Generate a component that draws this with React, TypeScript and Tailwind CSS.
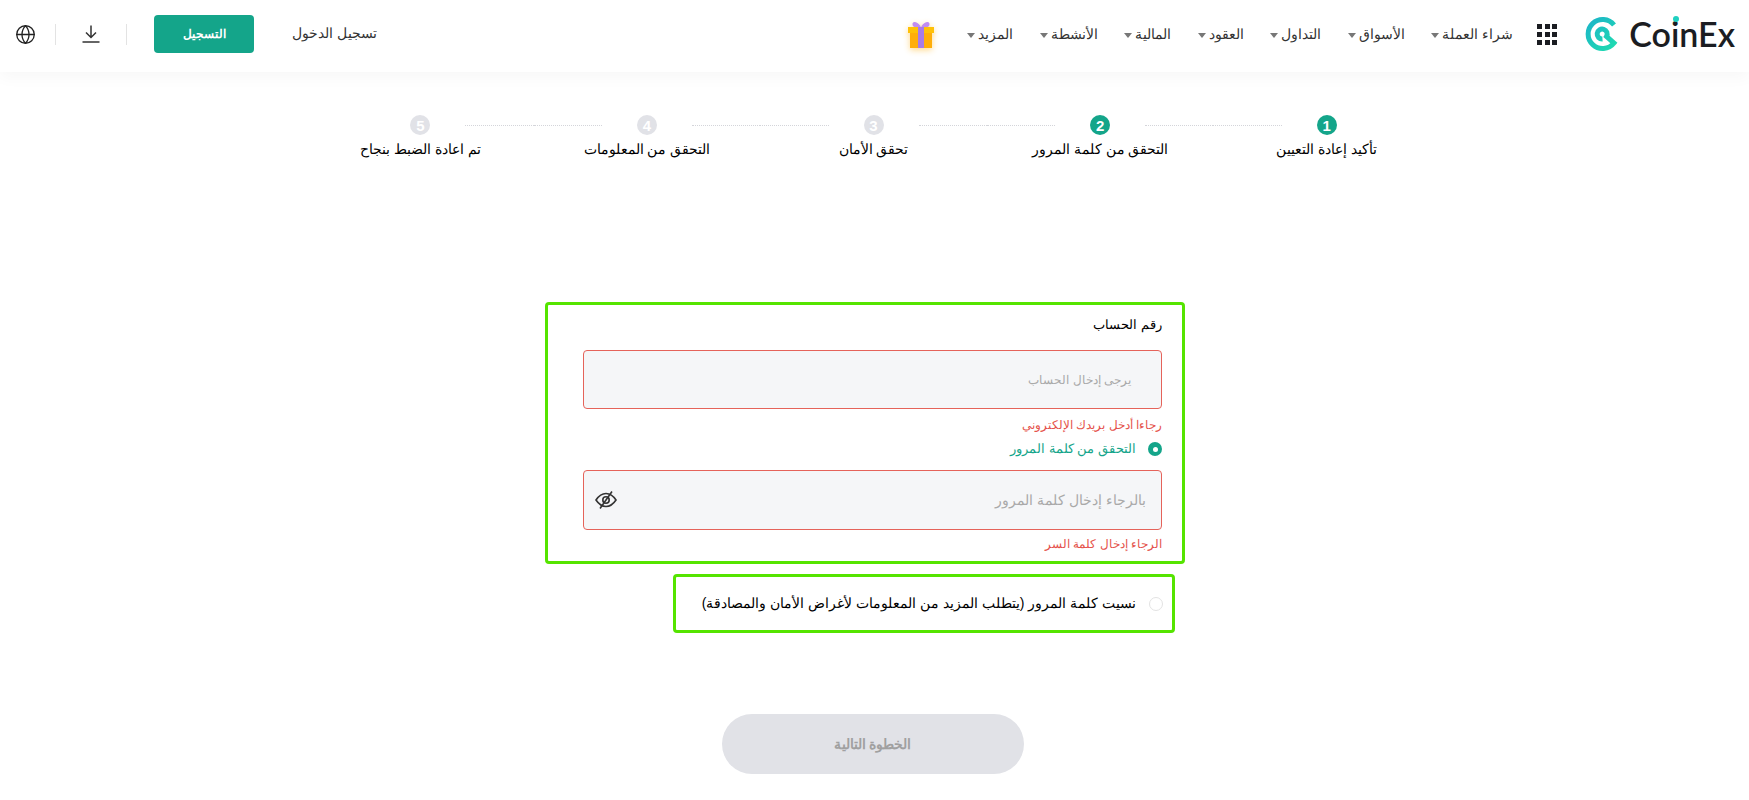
import React from 'react'
import { Globe } from 'lucide-react'

const navItems = ['شراء العملة', 'الأسواق', 'التداول', 'العقود', 'المالية', 'الأنشطة', 'المزيد']

const steps = [
  { n: 1, label: 'تأكيد إعادة التعيين', active: true },
  { n: 2, label: 'التحقق من كلمة المرور', active: true },
  { n: 3, label: 'تحقق الأمان', active: false },
  { n: 4, label: 'التحقق من المعلومات', active: false },
  { n: 5, label: 'تم اعادة الضبط بنجاح', active: false },
]

function Logo() {
  return (
    <div dir="ltr" className="flex items-center gap-[8px]">
      <svg width="36" height="38" viewBox="0 0 36 38" fill="none">
        <defs>
          <linearGradient id="coinex" x1="4" y1="4" x2="30" y2="34" gradientUnits="userSpaceOnUse">
            <stop offset="0" stopColor="#1cb5c8" />
            <stop offset="1" stopColor="#1fdcb0" />
          </linearGradient>
        </defs>
        <path
          d="M29 10A14.5 14.5 0 1 0 29 28L21.5 21.5A5 5 0 1 0 17.5 24"
          stroke="url(#coinex)"
          strokeWidth="5"
        />
      </svg>
      <span className="relative font-['Lato',sans-serif] text-[34px] leading-none font-semibold text-[#1b1d22]">
        Co
        <span className="relative">
          i
          <span className="absolute top-[3px] left-[2px] h-[6px] w-[6px] rounded-full bg-[#1fd0c0]" />
        </span>
        nEx
      </span>
    </div>
  )
}

function Gift() {
  return (
    <svg width="32" height="32" viewBox="0 0 32 32" className="drop-shadow-[0_2px_3px_rgba(255,170,0,0.45)]">
      <path d="M15.5 8C12 3 7 3 7.5 6.5S12 9.5 15.5 9.5Z" fill="#c08cf2" />
      <path d="M16.5 8C20 3 25 3 24.5 6.5S20 9.5 16.5 9.5Z" fill="#c08cf2" />
      <rect x="3" y="9" width="26" height="6" fill="#ffc107" />
      <rect x="5" y="15" width="22" height="15" fill="#ffae0a" />
      <rect x="13" y="9" width="6" height="21" fill="#a77be8" />
    </svg>
  )
}

function EyeOff() {
  return (
    <svg width="24" height="24" viewBox="0 0 24 24" fill="none" stroke="#333" strokeWidth="1.6">
      <path d="M2 12C5 7.5 8.5 5.5 12 5.5S19 7.5 22 12C19 16.5 15.5 18.5 12 18.5S5 16.5 2 12Z" />
      <circle cx="12" cy="12" r="3.2" />
      <path d="M6 20.5 18 3.5" />
    </svg>
  )
}

function Step({ n, label, active, first, last }: { n: number; label: string; active: boolean; first: boolean; last: boolean }) {
  return (
    <div className="flex w-[226.6px] flex-col items-center">
      <div className="flex w-full items-center">
        <div className="flex-1">
          {!first && <div className="me-[35px] border-t border-dotted border-[#d4d5da]" />}
        </div>
        <div
          className={
            'flex h-5 w-5 items-center justify-center rounded-full text-[15px] leading-none font-bold text-white ' +
            (active ? 'bg-[#14a58a]' : 'bg-[#e1e2e7]')
          }
        >
          {n}
        </div>
        <div className="flex-1">
          {!last && <div className="ms-[35px] border-t border-dotted border-[#d4d5da]" />}
        </div>
      </div>
      <div className="mt-[4px] text-[14px] leading-[20px] whitespace-nowrap text-black">{label}</div>
    </div>
  )
}

export default function App() {
  return (
    <div dir="rtl" className="h-[800px] overflow-hidden bg-white font-['Liberation_Sans',sans-serif]">
      <header className="flex h-[72px] items-center justify-between bg-white ps-[14px] pe-[15px] pb-[4px] shadow-[0_6px_14px_rgba(0,0,0,0.03)]">
        <div className="flex items-center">
          <Logo />
          <div className="ms-[28px] me-[24px] grid w-[20px] grid-cols-3 gap-[3px]">
            {Array.from({ length: 9 }).map((_, i) => (
              <span key={i} className="h-[5px] w-[5px] bg-[#1b1d22]" />
            ))}
          </div>
          <nav className="flex items-center gap-[26.5px]">
            {navItems.map((item) => (
              <div key={item} className="flex items-center gap-[3px] text-[14px] text-[#333]">
                <span>{item}</span>
                <span className="mt-[3px] h-0 w-0 border-x-[4px] border-t-[5px] border-x-transparent border-t-[#777]" />
              </div>
            ))}
          </nav>
          <div className="ms-[30px]">
            <Gift />
          </div>
        </div>
        <div className="flex items-center">
          <span className="text-[13.5px] text-[#333]">تسجيل الدخول</span>
          <button className="ms-[38px] h-[38px] w-[100px] rounded-[4px] bg-[#14a58a] text-[12px] font-bold text-white">
            التسجيل
          </button>
          <div className="ms-[27px] h-[21px] w-px bg-[#e3e3e3]" />
          <svg width="20" height="20" viewBox="0 0 20 20" fill="none" stroke="#333" strokeWidth="1.5" className="ms-[25px]">
            <path d="M10 1.5V13M5 8.5 10 13.5 15 8.5M1.5 18H18.5" />
          </svg>
          <div className="ms-[25px] h-[21px] w-px bg-[#e3e3e3]" />
          <Globe size={21} strokeWidth={1.5} className="ms-[19px] text-[#222]" />
        </div>
      </header>

      <div className="mt-[43px] flex justify-center ps-[2px]">
        {steps.map((s, i) => (
          <Step key={s.n} n={s.n} label={s.label} active={s.active} first={i === 0} last={i === steps.length - 1} />
        ))}
      </div>

      <div className="ms-[564px] mt-[143px] w-[640px]">
        <div className="h-[262px] rounded-[4px] border-[3px] border-[#55e400] ps-[20px] pe-[35px]">
          <div className="mt-[10px] text-[13px] leading-[20px] text-black">رقم الحساب</div>
          <div className="mt-[15px] flex h-[59px] items-center rounded-[4px] border border-[#e5635a] bg-[#f5f6f8] ps-[30px] pe-[13px] text-[12px] text-[#a9a9a9]">
            يرجى إدخال الحساب
          </div>
          <div className="mt-[7px] text-[12px] leading-[18px] text-[#e5534b]">رجاءا أدخل بريدك الإلكتروني</div>
          <div className="mt-[6px] flex items-center gap-[12px] text-[13px] leading-[18px] text-[#14a58a]">
            <span className="flex h-[14px] w-[14px] items-center justify-center rounded-full bg-[#14a58a]">
              <span className="h-[5px] w-[5px] rounded-full bg-white" />
            </span>
            التحقق من كلمة المرور
          </div>
          <div className="mt-[12px] flex h-[60px] items-center justify-between rounded-[4px] border border-[#e5635a] bg-[#f5f6f8] ps-[15px] pe-[10px] text-[14px] text-[#a9a9a9]">
            <span>بالرجاء إدخال كلمة المرور</span>
            <EyeOff />
          </div>
          <div className="mt-[5px] text-[12px] leading-[18px] text-[#e5534b]">الرجاء إدخال كلمة السر</div>
        </div>
        <div className="ms-[10px] mt-[10px] flex h-[59px] w-[502px] items-center gap-[13px] rounded-[4px] border-[3px] border-[#55e400] ps-[9px] text-[14px] text-black">
          <span className="h-[14px] w-[14px] rounded-full border border-[#e3e3e3]" />
          نسيت كلمة المرور (يتطلب المزيد من المعلومات لأغراض الأمان والمصادقة)
        </div>
      </div>

      <div className="mt-[81px] flex justify-center ps-[4px]">
        <button className="h-[60px] w-[302px] rounded-[30px] bg-[#e1e2e7] text-[14px] font-bold text-[#a0a0a0]">
          الخطوة التالية
        </button>
      </div>
    </div>
  )
}
